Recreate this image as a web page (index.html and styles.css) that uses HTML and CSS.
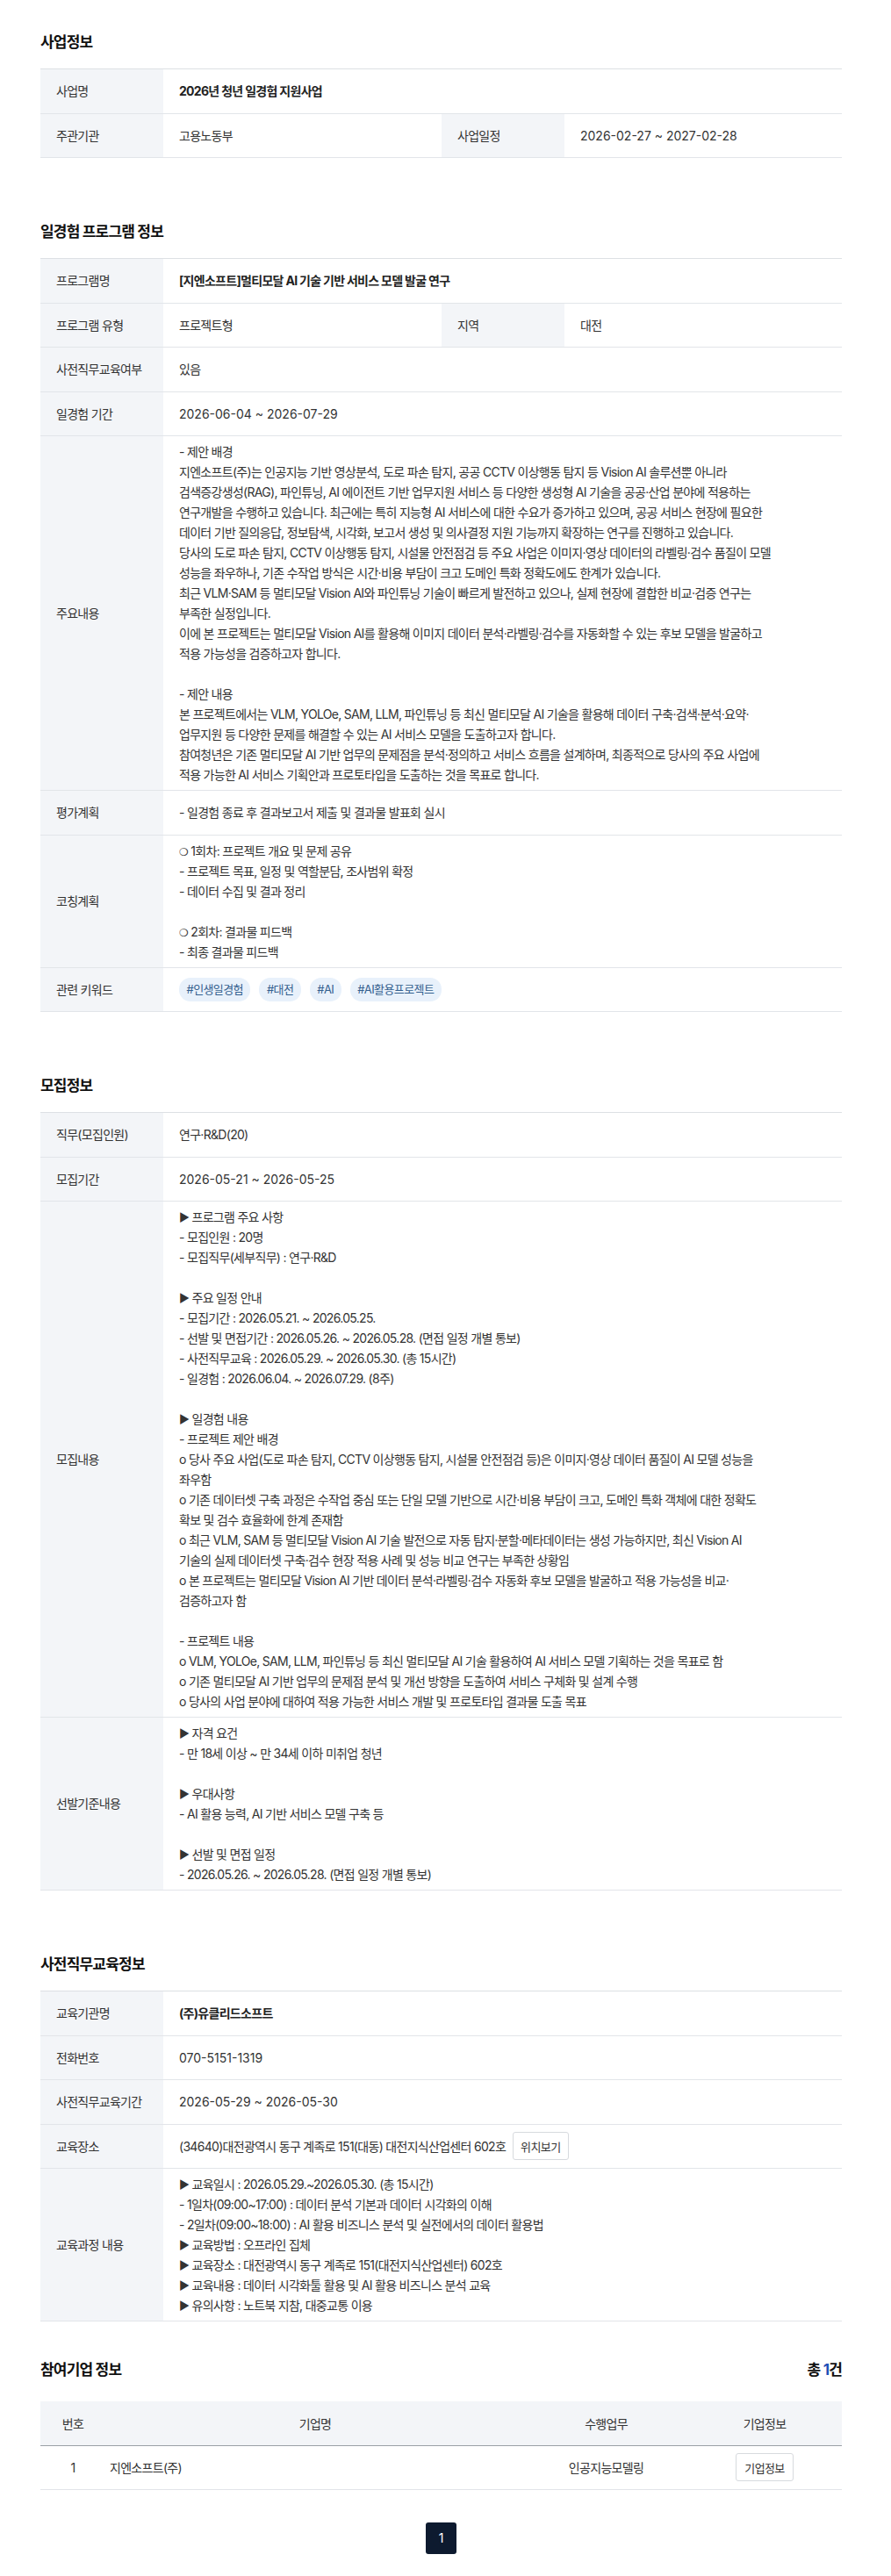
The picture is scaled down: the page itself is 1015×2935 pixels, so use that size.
FILE: index.html
```html
<!DOCTYPE html>
<html lang="ko">
<head>
<meta charset="utf-8">
<title>일경험 프로그램 상세</title>
<link rel="stylesheet" href="styles.css">
</head>
<body>
<div class="page">

  <section class="sec">
    <div class="sec-head"><h2 class="sec-title">사업정보</h2></div>
    <table class="info">
      <colgroup><col class="c-th"><col class="c-td"><col class="c-th"><col></colgroup>
      <tr><th>사업명</th><td colspan="3" class="strong">2026년 청년 일경험 지원사업</td></tr>
      <tr><th>주관기관</th><td>고용노동부</td><th>사업일정</th><td class="num">2026-02-27 ~ 2027-02-28</td></tr>
    </table>
  </section>

  <section class="sec">
    <div class="sec-head"><h2 class="sec-title">일경험 프로그램 정보</h2></div>
    <table class="info">
      <colgroup><col class="c-th"><col class="c-td"><col class="c-th"><col></colgroup>
      <tr><th>프로그램명</th><td colspan="3" class="strong">[지엔소프트]멀티모달 AI 기술 기반 서비스 모델 발굴 연구</td></tr>
      <tr><th>프로그램 유형</th><td>프로젝트형</td><th>지역</th><td>대전</td></tr>
      <tr><th>사전직무교육여부</th><td colspan="3">있음</td></tr>
      <tr><th>일경험 기간</th><td colspan="3" class="num">2026-06-04 ~ 2026-07-29</td></tr>
      <tr><th>주요내용</th><td colspan="3" class="long">- 제안 배경<br>지엔소프트(주)는 인공지능 기반 영상분석, 도로 파손 탐지, 공공 CCTV 이상행동 탐지 등 Vision AI 솔루션뿐 아니라<br>검색증강생성(RAG), 파인튜닝, AI 에이전트 기반 업무지원 서비스 등 다양한 생성형 AI 기술을 공공·산업 분야에 적용하는<br>연구개발을 수행하고 있습니다. 최근에는 특히 지능형 AI 서비스에 대한 수요가 증가하고 있으며, 공공 서비스 현장에 필요한<br>데이터 기반 질의응답, 정보탐색, 시각화, 보고서 생성 및 의사결정 지원 기능까지 확장하는 연구를 진행하고 있습니다.<br>당사의 도로 파손 탐지, CCTV 이상행동 탐지, 시설물 안전점검 등 주요 사업은 이미지·영상 데이터의 라벨링·검수 품질이 모델<br>성능을 좌우하나, 기존 수작업 방식은 시간·비용 부담이 크고 도메인 특화 정확도에도 한계가 있습니다.<br>최근 VLM·SAM 등 멀티모달 Vision AI와 파인튜닝 기술이 빠르게 발전하고 있으나, 실제 현장에 결합한 비교·검증 연구는<br>부족한 실정입니다.<br>이에 본 프로젝트는 멀티모달 Vision AI를 활용해 이미지 데이터 분석·라벨링·검수를 자동화할 수 있는 후보 모델을 발굴하고<br>적용 가능성을 검증하고자 합니다.<br><br>- 제안 내용<br>본 프로젝트에서는 VLM, YOLOe, SAM, LLM, 파인튜닝 등 최신 멀티모달 AI 기술을 활용해 데이터 구축·검색·분석·요약·<br>업무지원 등 다양한 문제를 해결할 수 있는 AI 서비스 모델을 도출하고자 합니다.<br>참여청년은 기존 멀티모달 AI 기반 업무의 문제점을 분석·정의하고 서비스 흐름을 설계하며, 최종적으로 당사의 주요 사업에<br>적용 가능한 AI 서비스 기획안과 프로토타입을 도출하는 것을 목표로 합니다.</td></tr>
      <tr><th>평가계획</th><td colspan="3">- 일경험 종료 후 결과보고서 제출 및 결과물 발표회 실시</td></tr>
      <tr><th>코칭계획</th><td colspan="3" class="long"><span class="ring">❍</span> 1회차: 프로젝트 개요 및 문제 공유<br>- 프로젝트 목표, 일정 및 역할분담, 조사범위 확정<br>- 데이터 수집 및 결과 정리<br><br><span class="ring">❍</span> 2회차: 결과물 피드백<br>- 최종 결과물 피드백</td></tr>
      <tr><th>관련 키워드</th><td colspan="3"><div class="tags"><span class="tag">#인생일경험</span><span class="tag">#대전</span><span class="tag">#AI</span><span class="tag">#AI활용프로젝트</span></div></td></tr>
    </table>
  </section>

  <section class="sec">
    <div class="sec-head"><h2 class="sec-title">모집정보</h2></div>
    <table class="info">
      <colgroup><col class="c-th"><col class="c-td"><col class="c-th"><col></colgroup>
      <tr><th>직무(모집인원)</th><td colspan="3">연구·R&amp;D(20)</td></tr>
      <tr><th>모집기간</th><td colspan="3" class="num">2026-05-21 ~ 2026-05-25</td></tr>
      <tr><th>모집내용</th><td colspan="3" class="long"><span class="tri">▶</span> 프로그램 주요 사항<br>- 모집인원 : 20명<br>- 모집직무(세부직무) : 연구·R&amp;D<br><br><span class="tri">▶</span> 주요 일정 안내<br>- 모집기간 : 2026.05.21. ~ 2026.05.25.<br>- 선발 및 면접기간 : 2026.05.26. ~ 2026.05.28. (면접 일정 개별 통보)<br>- 사전직무교육 : 2026.05.29. ~ 2026.05.30. (총 15시간)<br>- 일경험 : 2026.06.04. ~ 2026.07.29. (8주)<br><br><span class="tri">▶</span> 일경험 내용<br>- 프로젝트 제안 배경<br>o 당사 주요 사업(도로 파손 탐지, CCTV 이상행동 탐지, 시설물 안전점검 등)은 이미지·영상 데이터 품질이 AI 모델 성능을<br>좌우함<br>o 기존 데이터셋 구축 과정은 수작업 중심 또는 단일 모델 기반으로 시간·비용 부담이 크고, 도메인 특화 객체에 대한 정확도<br>확보 및 검수 효율화에 한계 존재함<br>o 최근 VLM, SAM 등 멀티모달 Vision AI 기술 발전으로 자동 탐지·분할·메타데이터는 생성 가능하지만, 최신 Vision AI<br>기술의 실제 데이터셋 구축·검수 현장 적용 사례 및 성능 비교 연구는 부족한 상황임<br>o 본 프로젝트는 멀티모달 Vision AI 기반 데이터 분석·라벨링·검수 자동화 후보 모델을 발굴하고 적용 가능성을 비교·<br>검증하고자 함<br><br>- 프로젝트 내용<br>o VLM, YOLOe, SAM, LLM, 파인튜닝 등 최신 멀티모달 AI 기술 활용하여 AI 서비스 모델 기획하는 것을 목표로 함<br>o 기존 멀티모달 AI 기반 업무의 문제점 분석 및 개선 방향을 도출하여 서비스 구체화 및 설계 수행<br>o 당사의 사업 분야에 대하여 적용 가능한 서비스 개발 및 프로토타입 결과물 도출 목표</td></tr>
      <tr><th>선발기준내용</th><td colspan="3" class="long"><span class="tri">▶</span> 자격 요건<br>- 만 18세 이상 ~ 만 34세 이하 미취업 청년<br><br><span class="tri">▶</span> 우대사항<br>- AI 활용 능력, AI 기반 서비스 모델 구축 등<br><br><span class="tri">▶</span> 선발 및 면접 일정<br>- 2026.05.26. ~ 2026.05.28. (면접 일정 개별 통보)</td></tr>
    </table>
  </section>

  <section class="sec">
    <div class="sec-head"><h2 class="sec-title">사전직무교육정보</h2></div>
    <table class="info">
      <colgroup><col class="c-th"><col class="c-td"><col class="c-th"><col></colgroup>
      <tr><th>교육기관명</th><td colspan="3" class="strong">(주)유클리드소프트</td></tr>
      <tr><th>전화번호</th><td colspan="3" class="num">070-5151-1319</td></tr>
      <tr><th>사전직무교육기간</th><td colspan="3" class="num">2026-05-29 ~ 2026-05-30</td></tr>
      <tr><th>교육장소</th><td colspan="3"><div class="place"><span>(34640)대전광역시 동구 계족로 151(대동) 대전지식산업센터 602호</span><button type="button" class="btn">위치보기</button></div></td></tr>
      <tr><th>교육과정 내용</th><td colspan="3" class="long"><span class="tri">▶</span> 교육일시 : 2026.05.29.~2026.05.30. (총 15시간)<br>- 1일차(09:00~17:00) : 데이터 분석 기본과 데이터 시각화의 이해<br>- 2일차(09:00~18:00) : AI 활용 비즈니스 분석 및 실전에서의 데이터 활용법<br><span class="tri">▶</span> 교육방법 : 오프라인 집체<br><span class="tri">▶</span> 교육장소 : 대전광역시 동구 계족로 151(대전지식산업센터) 602호<br><span class="tri">▶</span> 교육내용 : 데이터 시각화툴 활용 및 AI 활용 비즈니스 분석 교육<br><span class="tri">▶</span> 유의사항 : 노트북 지참, 대중교통 이용</td></tr>
    </table>
  </section>

  <section class="sec sec-tight">
    <div class="sec-head sec-head-list"><h2 class="sec-title">참여기업 정보</h2><p class="total">총 <em>1</em>건</p></div>
    <table class="list">
      <colgroup><col class="c-no"><col class="c-name"><col class="c-job"><col class="c-info"></colgroup>
      <thead><tr><th>번호</th><th>기업명</th><th>수행업무</th><th>기업정보</th></tr></thead>
      <tbody><tr><td>1</td><td class="name">지엔소프트(주)</td><td>인공지능모델링</td><td><button type="button" class="btn btn-wide">기업정보</button></td></tr></tbody>
    </table>
    <nav class="pager"><span class="page-num">1</span></nav>
  </section>

</div>
</body>
</html>
```
FILE: styles.css
```css
* { box-sizing: border-box; }

body {
  margin: 0;
  background: #ffffff;
  color: #333333;
  font-family: Inter, "Noto Sans CJK KR", sans-serif;
  font-size: 14px;
  letter-spacing: -0.7px;
}

.page {
  width: 913px;
  margin-left: 46px;
  padding-top: 35px;
  padding-bottom: 27px;
}

.sec + .sec { margin-top: 71px; }
.sec + .sec.sec-tight { margin-top: 42px; }

.sec-head {
  display: flex;
  justify-content: space-between;
  align-items: center;
  margin-bottom: 17px;
}
.sec-head-list { margin-bottom: 23px; }

.sec-title {
  margin: 0;
  font-size: 17px;
  line-height: 26px;
  font-weight: 700;
  color: #111111;
  letter-spacing: -0.8px;
}

.total {
  margin: 0;
  font-size: 17px;
  line-height: 26px;
  font-weight: 700;
  color: #111111;
  letter-spacing: -0.8px;
}
.total em { font-style: normal; color: #1f4fb6; }

/* detail tables */
.info {
  width: 100%;
  border-collapse: collapse;
  table-layout: fixed;
  border-top: 1px solid #dde0e4;
}
.c-th { width: 140px; }
.c-td { width: 317px; }

.info th {
  background: #f3f5f8;
  font-weight: 400;
  text-align: left;
  color: #333333;
  padding: 14px 18px 13.5px;
  line-height: 22px;
  border-bottom: 1px solid #e2e5e9;
  vertical-align: middle;
}
.info td {
  padding: 6px 18px;
  line-height: 23px;
  border-bottom: 1px solid #e2e5e9;
  vertical-align: middle;
  color: #333333;
}
.info td.strong { font-weight: 700; color: #222222; }
.info td.num { letter-spacing: 0; }
.info td.long { white-space: nowrap; }

.tri { font-size: 13px; line-height: 0; }
.ring { font-family: "DejaVu Sans", sans-serif; font-size: 12px; line-height: 0; }

.tags { display: flex; gap: 10px; }
.tag {
  display: inline-block;
  height: 27px;
  line-height: 27px;
  padding: 0 8.5px;
  border-radius: 13px;
  background: #e8f1fb;
  color: #34608f;
  font-size: 13px;
  letter-spacing: -0.6px;
}

.place { display: flex; align-items: center; gap: 8px; }

.btn {
  display: inline-flex;
  align-items: center;
  justify-content: center;
  height: 32px;
  padding: 0 8px;
  border: 1px solid #d7dade;
  border-radius: 3px;
  background: #ffffff;
  color: #333333;
  font-family: inherit;
  font-size: 13px;
  letter-spacing: -0.6px;
  cursor: pointer;
}
.btn-wide { padding: 0 9px; }

/* company list */
.list {
  width: 100%;
  border-collapse: collapse;
  table-layout: fixed;
}
.c-no { width: 74px; }
.c-name { width: 478px; }
.c-job { width: 185px; }
.c-info { width: 176px; }

.list th {
  background: #f3f5f8;
  font-weight: 400;
  color: #333333;
  height: 50px;
  padding: 0;
  text-align: center;
  border-bottom: 1px solid #9aa0a6;
  vertical-align: middle;
}
.list td {
  height: 50px;
  padding: 0;
  text-align: center;
  border-bottom: 1px solid #e2e5e9;
  vertical-align: middle;
}
.list td.name { text-align: left; padding-left: 5px; }

.pager {
  display: flex;
  justify-content: center;
  margin-top: 37px;
}
.page-num {
  display: flex;
  align-items: center;
  justify-content: center;
  width: 35px;
  height: 36px;
  border-radius: 3px;
  background: #0d1a2f;
  color: #ffffff;
  font-size: 14px;
  letter-spacing: 0;
}
```
